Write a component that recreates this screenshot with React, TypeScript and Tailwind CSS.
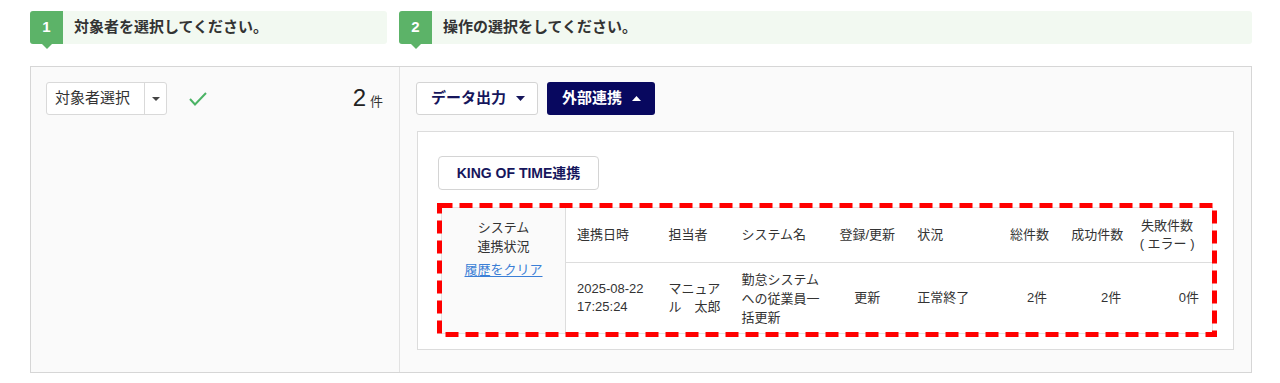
import React from "react";

const FONT = { fontFamily: '"Liberation Sans", "Noto Sans CJK JP", sans-serif' };

function Step({ num, label, className }: { num: string; label: string; className: string }) {
  return (
    <div className={`flex h-[33px] items-center rounded-[3px] bg-[#f2f9f1] ${className}`}>
      <div className="relative flex h-full w-[33px] items-center justify-center rounded-l-[3px] bg-[#5cb368] text-[15px] font-bold text-white">
        {num}
        <span className="absolute -bottom-[5px] left-1/2 -ml-[5px] h-0 w-0 border-x-[5px] border-t-[5px] border-x-transparent border-t-[#5cb368]" />
      </div>
      <span className="ml-[11px] text-[15px] font-bold text-[#333]">{label}</span>
    </div>
  );
}

function Caret({ up, color }: { up?: boolean; color: string }) {
  return (
    <svg width="9" height="5" viewBox="0 0 9 5" className="ml-[10px]">
      {up ? <polygon points="0,5 9,5 4.5,0" fill={color} /> : <polygon points="0,0 9,0 4.5,5" fill={color} />}
    </svg>
  );
}

export default function App() {
  const th = "whitespace-nowrap border-b border-[#ddd] px-[11px] text-left align-middle font-normal";
  const td = "px-[11px] align-middle";

  return (
    <div className="w-[1280px] bg-white pl-[30px] pt-[11px] text-[#333]" style={FONT}>
      <div className="flex w-[1222px] gap-[12px]">
        <Step num="1" label="対象者を選択してください。" className="w-[357px]" />
        <Step num="2" label="操作の選択をしてください。" className="flex-1" />
      </div>

      <div className="mt-[22px] flex h-[307px] w-[1222px] border border-[#d6d6d6] bg-[#fafafa]">
        {/* left column */}
        <div className="w-[369px] border-r border-[#e2e2e2] px-[15px] pt-[15px]">
          <div className="flex items-center">
            <div className="flex h-[33px] w-[121px] items-center rounded-[3px] border border-[#d9d9d9] bg-white">
              <span className="flex-1 pl-[8px] text-[15px] text-[#333]">対象者選択</span>
              <span className="flex h-full w-[22px] items-center justify-center border-l border-[#d9d9d9]">
                <svg width="8" height="4" viewBox="0 0 8 4">
                  <polygon points="0,0 8,0 4,4" fill="#444" />
                </svg>
              </span>
            </div>
            <svg width="20" height="16" viewBox="0 0 20 16" className="ml-[21px]">
              <polyline points="2,8 7,13.5 18,2" fill="none" stroke="#4bb365" strokeWidth="2" />
            </svg>
            <div className="ml-auto flex items-baseline pr-[1px]">
              <span className="text-[24px] leading-none text-[#222]">2</span>
              <span className="ml-[4px] text-[13px] text-[#333]">件</span>
            </div>
          </div>
        </div>

        {/* right column */}
        <div className="flex-1 pl-[16px] pr-[17px] pt-[15px]">
          <div className="flex gap-[9px]">
            <button className="flex h-[33px] items-center rounded-[3px] border border-[#d4d4d4] bg-white pl-[14px] pr-[12px] text-[15px] font-bold text-[#16165c]">
              データ出力
              <Caret color="#16165c" />
            </button>
            <button className="flex h-[33px] items-center rounded-[3px] bg-[#08085f] pl-[15px] pr-[14px] text-[15px] font-bold text-white">
              外部連携
              <Caret up color="#ffffff" />
            </button>
          </div>

          <div className="ml-[1px] mt-[16px] h-[219px] border border-[#dcdcdc] bg-white pl-[19px] pr-[16px] pt-[24px]">
            <button className="ml-[1px] flex h-[34px] w-[161px] items-center justify-center rounded-[4px] border border-[#d4d4d4] bg-white text-[14px] font-bold text-[#16165c]">
              KING OF TIME連携
            </button>

            <div className="relative mt-[13px] h-[134px] w-[780px] p-[4px]">
              <table className="w-full border-collapse border border-[#e4e4e4] text-[13px] leading-[18px] text-[#333]">
                <colgroup>
                  <col className="w-[124px]" />
                  <col className="w-[92px]" />
                  <col className="w-[73px]" />
                  <col className="w-[98px]" />
                  <col className="w-[77px]" />
                  <col className="w-[85px]" />
                  <col className="w-[69px]" />
                  <col className="w-[74px]" />
                  <col />
                </colgroup>
                <tbody>
                  <tr className="h-[55px]">
                    <td rowSpan={2} className="border-r border-[#ddd] bg-[#fafafa] pt-[10px] text-center align-top leading-[19px]">
                      システム
                      <br />
                      連携状況
                      <div className="mt-[4px]">
                        <a className="text-[#3b7fd6] underline underline-offset-2">履歴をクリア</a>
                      </div>
                    </td>
                    <th className={th}>連携日時</th>
                    <th className={th}>担当者</th>
                    <th className={th}>システム名</th>
                    <th className={th}>登録/更新</th>
                    <th className={th}>状況</th>
                    <th className={th} style={{ textAlign: "right" }}>総件数</th>
                    <th className={th} style={{ textAlign: "right" }}>成功件数</th>
                    <th className="whitespace-nowrap border-b border-[#ddd] pl-[2px] pr-[14px] text-center align-middle font-normal">
                      失敗件数
                      <br />( エラー )
                    </th>
                  </tr>
                  <tr className="h-[71px]">
                    <td className={td}>
                      2025-08-22
                      <br />
                      17:25:24
                    </td>
                    <td className={`${td} pr-[6px]`}>マニュアル　太郎</td>
                    <td className={`${td} pr-[8px] leading-[19px]`}>勤怠システムへの従業員一括更新</td>
                    <td className={`${td} text-center`}>更新</td>
                    <td className={td}>正常終了</td>
                    <td className={`${td} pr-[13px] text-right`}>2件</td>
                    <td className={`${td} pr-[13px] text-right`}>2件</td>
                    <td className="pr-[13px] text-right align-middle">0件</td>
                  </tr>
                </tbody>
              </table>
              {/* red dashed annotation over the table */}
              <svg width="780" height="134" className="pointer-events-none absolute left-0 top-0">
                <rect x="2.5" y="2.5" width="775" height="129" fill="none" stroke="#ff0000" strokeWidth="5" strokeDasharray="13 7" />
              </svg>
            </div>
          </div>
        </div>
      </div>
    </div>
  );
}
